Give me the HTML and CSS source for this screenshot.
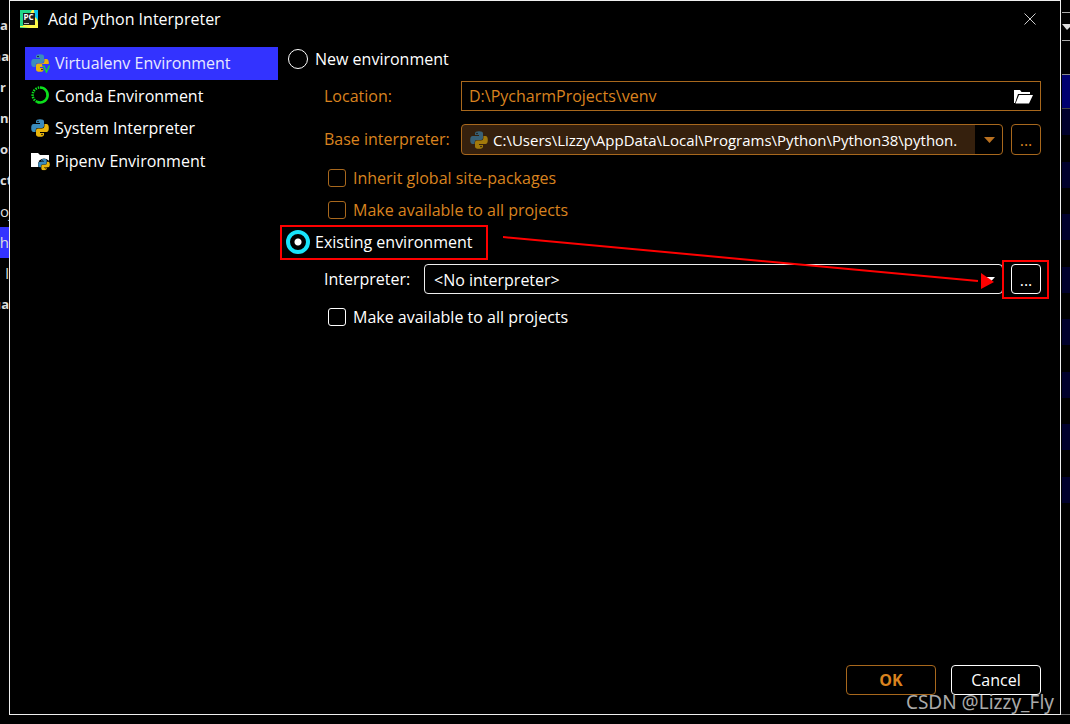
FILE: index.html
```html
<!DOCTYPE html>
<html lang="en">
<head>
<meta charset="utf-8">
<title>Add Python Interpreter</title>
<link rel="stylesheet" href="styles.css">
</head>
<body>
<svg class="defs" aria-hidden="true">
  <symbol id="python" viewBox="0 0 18 18">
    <path class="py-blue" d="M5 4V2.600Q5 .3 9 .3T13 2.600V7Q13 9 11 9H7Q4.600 9 4.600 11.200V13H2.600Q.2 13 .2 9T2.600 5H9V4Z"/>
    <path class="py-gold" d="M13 14V15.400Q13 17.700 9 17.700T5 15.400V11.500Q5 9.500 7 9.500H11Q13.400 9.500 13.400 7.300V5H15.400Q17.800 5 17.800 9T15.400 13H9V14Z"/>
    <circle class="py-eye" cx="7" cy="2.500" r=".8"/><circle class="py-eye" cx="11" cy="15.500" r=".8"/>
  </symbol>
</svg>
<div class="desktop">
  <div class="behind-left" aria-hidden="true">
    <span>a</span><span class="end">na</span><span>r</span><span>ns</span><span>or</span><span>ct</span><span class="plain">oj</span><span class="plain current end">th</span><span class="plain end">l</span><span class="end">ua</span>
  </div>

  <main class="dialog">
    <header class="titlebar">
      <svg class="logo" viewBox="0 0 18 18" aria-hidden="true">
        <path fill="#21d789" d="M0 0H18V18H0Z"/><path fill="#fcf84a" d="M8 0H14L18 12V18H9L0 17V13Z"/><path fill="#07c3f2" d="M14 0H18V10L15 7Z"/><path fill="#21d789" d="M0 0H12L3 16H0Z"/>
        <path fill="#1a1a1a" d="M3 3H15V15H3Z"/><path stroke="#bbb" d="M4 13.500H9"/>
        <text x="3.500" y="9.500" class="logo-text">PC</text>
      </svg>
      <h1>Add Python Interpreter</h1>
      <button class="close" aria-label="Close"><svg viewBox="0 0 12 12"><path d="M.5 .5L11.500 11.500M11.500 .5L.5 11.500"/></svg></button>
    </header>

    <div class="body">
      <nav class="kinds">
        <a href="#virtualenv" class="kind selected">
          <svg viewBox="0 0 20 20" class="icon"><use href="#python" y="1" width="18" height="18"/><path d="M11 11H20V20H13Z" fill="#33f"/><path d="M12.500 12.500L15.500 19L18.500 12.500" fill="none" stroke="#12d83c" stroke-width="1.500"/></svg>Virtualenv Environment</a>
        <a href="#conda" class="kind">
          <svg viewBox="0 0 20 20" class="icon" fill="none" stroke="#0ce01c"><path stroke-width="2.600" d="M9 1.500A7.500 7.500 0 1 1 6 15.800"/><path stroke-width="2.500" stroke-dasharray="1.500 1" d="M6 15.800A7.500 7.500 0 0 1 9 1.500"/></svg>Conda Environment</a>
        <a href="#system" class="kind">
          <svg viewBox="0 0 20 20" class="icon"><use href="#python" y="1" width="18" height="18"/></svg>System Interpreter</a>
        <a href="#pipenv" class="kind">
          <svg viewBox="0 0 20 20" class="icon"><path fill="#fff" d="M0 2H7L9 4H18V16H0Z"/><circle cx="13" cy="13.500" r="6" fill="#000"/><use href="#python" x="7" y="7.500" width="12" height="12"/></svg>Pipenv Environment</a>
      </nav>

      <form class="form">
        <label class="radio-row"><input type="radio" name="env">New environment</label>
        <div class="row dim gap-small">
          <label class="name" for="location">Location:</label>
          <div class="field">
            <input id="location" class="text" type="text" value="D:\PycharmProjects\venv" disabled>
            <svg class="folder" viewBox="0 0 20 15" aria-hidden="true"><path fill="#fff" d="M0 14V1H6L7.500 3H16V5H4L1 14ZM5 6H19L15 14.500H1.500Z"/></svg>
          </div>
        </div>
        <div class="row tall dim gap-large">
          <label class="name" for="base">Base interpreter:</label>
          <div class="field">
            <select id="base" class="combo base" disabled><option>C:\Users\Lizzy\AppData\Local\Programs\Python\Python38\python.</option></select>
            <svg class="base-icon" viewBox="0 0 18 18" aria-hidden="true"><use href="#python"/></svg>
            <svg class="arrow" viewBox="0 0 11 6" aria-hidden="true"><path d="M0 0H11L5.500 6Z"/></svg>
          </div>
          <button type="button" class="more" aria-label="Browse base interpreter" disabled>...</button>
        </div>
        <label class="check-row dim gap-medium"><input type="checkbox" disabled>Inherit global site-packages</label>
        <label class="check-row dim"><input type="checkbox" disabled>Make available to all projects</label>
        <label class="radio-row marked"><input type="radio" name="env" checked>Existing environment</label>
        <div class="row gap-small">
          <label class="name short" for="existing">Interpreter:</label>
          <div class="field">
            <select id="existing" class="combo"><option>&lt;No interpreter&gt;</option></select>
            <svg class="arrow" viewBox="0 0 11 6" aria-hidden="true"><path d="M0 0H11L5.500 6Z"/></svg>
          </div>
          <div class="more-mark"><button type="button" class="more" aria-label="Browse interpreter">...</button></div>
        </div>
        <label class="check-row gap-medium"><input type="checkbox">Make available to all projects</label>
        <svg class="pointer" viewBox="0 0 493 54" aria-hidden="true"><path d="M0 2L475 46" stroke="#f00" stroke-width="2"/><path d="M478 38L491 47L478 54Z" fill="#f00"/></svg>
      </form>
    </div>

    <footer class="actions">
      <button class="ok" disabled>OK</button>
      <button class="cancel">Cancel</button>
    </footer>
  </main>

  <div class="behind-right" aria-hidden="true">
    <div class="toolbar"><svg viewBox="0 0 9 6"><path fill="#ddd" d="M0 0H9V2L5 6Z"/></svg></div>
    <div class="table-head"></div>
    <div class="stripes"><i></i><i></i><i></i><i></i><i></i><i></i><i></i><i></i><i></i><i></i><i></i><i></i><i></i><i></i><i></i></div>
  </div>
  <span class="watermark">CSDN @Lizzy_Fly</span>
</div>
</body>
</html>
```
FILE: styles.css
```css
* { box-sizing: border-box; }
body { margin: 0; background: #000; color: #fff; font: 16px/24px "Open Sans", "Noto Sans", sans-serif; }
button, input, select { font: inherit; color: inherit; margin: 0; }
button { background: #000; padding: 0; }
.defs { position: absolute; width: 0; height: 0; }
.py-blue { fill: #3b8cbc; }
.py-gold { fill: #e9b50b; }
.py-eye { fill: #111; }

.desktop { position: relative; display: grid; grid-template-columns: 9px minmax(0, 1fr) 9px; min-height: 100vh; padding-bottom: 9px; overflow: hidden; }
.behind-left { padding-top: 10px; overflow: hidden; font-size: 13px; font-weight: 700; color: #ddd; }
.behind-left span { display: flex; height: 31px; line-height: 31px; }
.behind-left .end { justify-content: flex-end; }
.behind-left .plain { font-size: 15px; font-weight: 400; }
.behind-left .current { background: #33f; }
.behind-right { padding: 12px 0 0 1px; border-bottom: 1px solid #666; }
.toolbar { height: 29px; padding-top: 11px; border-top: 1px solid #aaa; border-bottom: 1px solid #aaa; }
.toolbar svg { display: block; height: 6px; }
.table-head { height: 35px; margin-top: 33px; background: #000070; border-top: 1px solid #888; border-bottom: 1px solid #444; }
.stripes { display: grid; grid-auto-rows: 1fr; height: 394px; }
.stripes i:nth-child(odd) { background: #00002c; }

.dialog { display: flex; flex-direction: column; border: 1px solid #eee; }
.titlebar { display: flex; align-items: center; height: 36px; padding: 0 24px 0 10px; gap: 10px; }
.titlebar h1 { flex: 1; margin: 0; font-size: 16px; font-weight: 400; }
.logo { width: 18px; height: 18px; }
.logo-text { font: 700 8px "Open Sans", sans-serif; fill: #fff; }
.close { display: grid; border: 0; }
.close svg { width: 12px; height: 12px; stroke: #ccc; }

.body { flex: 1; display: flex; gap: 8px; padding: 6px 19px 0 15px; }
.kinds { display: grid; grid-auto-rows: 1fr; width: 253px; height: 130px; margin-top: 4px; }
.kind { display: flex; align-items: center; gap: 4px; padding-left: 6px; color: #fff; text-decoration: none; }
.kind.selected { background: #33f; color: #e8e8ff; }
.icon { width: 20px; height: 20px; }

.form { position: relative; flex: 1; min-width: 0; display: flex; flex-direction: column; align-items: flex-start; }
.radio-row, .check-row { display: flex; align-items: center; height: 32px; }
.radio-row { position: relative; gap: 5px; }
.radio-row input { appearance: none; width: 20px; height: 20px; margin: 0 2px; border: 1px solid #fff; border-radius: 50%; }
.radio-row input:checked { width: 24px; height: 24px; margin: 0; border: 4px solid #18e4fa; background: radial-gradient(circle, #fff 3px, #000 4px); }
.marked::after { content: ""; position: absolute; inset: -1px -16px -2px -6px; border: 2px solid #f00; }
.check-row { gap: 7px; padding-left: 42px; }
.check-row input { appearance: none; width: 18px; height: 18px; border: 1px solid #fff; border-radius: 3px; }
.row { display: flex; align-self: stretch; height: 30px; padding-left: 38px; line-height: 30px; }
.row.tall { height: 31px; }
.name { width: 137px; flex: none; }
.name.short { width: 100px; }
.gap-small { margin-top: 6px; }
.gap-medium { margin-top: 7px; }
.gap-large { margin-top: 13px; }
.dim { color: #d9831f; }
.dim input, .dim button, .dim select { border-color: #a8681d; }
.field { position: relative; flex: 1; min-width: 0; }
.text, .combo { appearance: none; width: 100%; height: 30px; background: #000; border: 1px solid #eee; }
.text { padding: 0 36px 0 7px; border-color: #a8681d; }
.folder { position: absolute; right: 7px; top: 8px; width: 20px; height: 15px; }
.combo { padding: 0 28px 0 9px; border-radius: 4px; opacity: 1; }
.base { height: 31px; padding-left: 31px; font-size: 15px; color: #fff; background: linear-gradient(#000, #000) right / 27px 100% no-repeat #35200d; }
.base-icon { position: absolute; left: 9px; top: 7px; width: 18px; height: 18px; opacity: .6; }
.arrow { position: absolute; right: 8px; top: 13px; width: 11px; height: 6px; fill: #fff; }
.dim .arrow { fill: #b87020; }
.more { width: 30px; margin-left: 8px; border: 1px solid #fff; border-radius: 4px; }
.more-mark { position: relative; display: flex; }
.more-mark::after { content: ""; position: absolute; inset: -4px -8px -5px -1px; border: 2px solid #f00; }
.pointer { position: absolute; right: 45px; top: 192px; width: 493px; height: 54px; }

.actions { display: flex; justify-content: flex-end; gap: 15px; padding: 0 19px 19px; }
.actions button { height: 30px; width: 90px; border: 1px solid #fff; border-radius: 4px; }
.actions .ok { color: #d9831f; border-color: #a8681d; font-weight: 700; }
.watermark { position: absolute; right: 16px; bottom: 9px; font-family: "Noto Sans", sans-serif; font-size: 19px; line-height: 26px; color: #aaa; }
```
